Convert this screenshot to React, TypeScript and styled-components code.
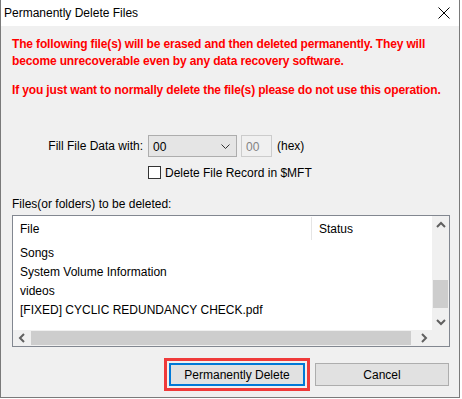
import React from 'react';
import styled, { createGlobalStyle } from 'styled-components';

const GlobalStyle = createGlobalStyle`
  html, body {
    margin: 0;
    padding: 0;
    background: #ffffff;
  }
  body {
    font-family: 'Liberation Sans', Arial, sans-serif;
    font-size: 12px;
    color: #000;
  }
`;

const files = ['Songs', 'System Volume Information', 'videos', '[FIXED] CYCLIC REDUNDANCY CHECK.pdf'];

function Chevron({ dir }: { dir: 'up' | 'down' | 'left' | 'right' }) {
  const pts = {
    up: '1,6 5,2 9,6',
    down: '1,2 5,6 9,2',
    left: '6,1 2,5 6,9',
    right: '2,1 6,5 2,9',
  }[dir];
  const vertical = dir === 'up' || dir === 'down';
  return (
    <svg width={vertical ? 10 : 8} height={vertical ? 8 : 10} viewBox={vertical ? '0 0 10 8' : '0 0 8 10'}>
      <polyline points={pts} fill="none" stroke="#606060" strokeWidth="2" />
    </svg>
  );
}

export default function App() {
  return (
    <>
      <GlobalStyle />
      <Window>
        <TitleBar>
          <Title>Permanently Delete Files</Title>
          <CloseIcon width="12" height="12" viewBox="0 0 12 12">
            <path d="M0.5 0.5 L11.5 11.5 M11.5 0.5 L0.5 11.5" stroke="#000" strokeWidth="1" />
          </CloseIcon>
        </TitleBar>
        <Body>
          <Warning>
            The following file(s) will be erased and then deleted permanently. They will
            <br />
            become unrecoverable even by any data recovery software.
          </Warning>
          <Warning $gap>If you just want to normally delete the file(s) please do not use this operation.</Warning>

          <FormGrid>
            <FieldLabel>Fill File Data with:</FieldLabel>
            <FieldRow>
              <Combo>
                <span>00</span>
                <svg width="9" height="5" viewBox="0 0 9 5">
                  <polyline points="0.5,0.5 4.5,4.5 8.5,0.5" fill="none" stroke="#333" strokeWidth="1" />
                </svg>
              </Combo>
              <HexInput>00</HexInput>
              <Hint>(hex)</Hint>
            </FieldRow>
            <span />
            <CheckRow>
              <CheckBox />
              <span>Delete File Record in $MFT</span>
            </CheckRow>
          </FormGrid>

          <ListLabel>Files(or folders) to be deleted:</ListLabel>
          <ListView>
            <ListMain>
              <HeaderRow>
                <HeaderCell $width={299}>File</HeaderCell>
                <HeaderCell>Status</HeaderCell>
              </HeaderRow>
              <Rows>
                {files.map((f) => (
                  <FileRow key={f}>{f}</FileRow>
                ))}
              </Rows>
            </ListMain>
            <VScroll>
              <ArrowBox $size={17}>
                <Chevron dir="up" />
              </ArrowBox>
              <VTrack>
                <VThumb />
              </VTrack>
              <ArrowBox $size={17}>
                <Chevron dir="down" />
              </ArrowBox>
            </VScroll>
            <HScroll>
              <ArrowBox $size={17}>
                <Chevron dir="left" />
              </ArrowBox>
              <HThumb />
              <ArrowBox $size={17}>
                <Chevron dir="right" />
              </ArrowBox>
            </HScroll>
            <Corner />
          </ListView>

          <ButtonRow>
            <Highlight>
              <Button $primary>Permanently Delete</Button>
            </Highlight>
            <Button>Cancel</Button>
          </ButtonRow>
        </Body>
      </Window>
    </>
  );
}

const Window = styled.div`
  width: 458px;
  height: 397px;
  border: 1px solid #7a7a7a;
  border-top: none;
  background: #f0f0f0;
  display: flex;
  flex-direction: column;
`;

const TitleBar = styled.div`
  height: 26px;
  background: #ffffff;
  display: flex;
  align-items: center;
  justify-content: space-between;
  padding: 0 9px 0 3px;
`;

const Title = styled.div`
  font-size: 12px;
  line-height: 16px;
`;

const CloseIcon = styled.svg`
  display: block;
`;

const Body = styled.div`
  padding: 10px 10px 0 11px;
`;

const Warning = styled.p<{ $gap?: boolean }>`
  margin: ${({ $gap }) => ($gap ? '12px' : '0')} 0 0;
  color: #ff0000;
  font-weight: bold;
  font-size: 12px;
  line-height: 17px;
  letter-spacing: -0.15px;
  white-space: nowrap;
`;

const FormGrid = styled.div`
  margin-top: 36px;
  display: grid;
  grid-template-columns: 136px auto;
  row-gap: 9px;
  align-items: center;
`;

const FieldLabel = styled.div`
  text-align: right;
  padding-right: 5px;
`;

const FieldRow = styled.div`
  display: flex;
  align-items: center;
  height: 22px;
`;

const Combo = styled.div`
  box-sizing: border-box;
  width: 89px;
  height: 22px;
  border: 1px solid #adadad;
  background: #e5e5e5;
  display: flex;
  align-items: center;
  justify-content: space-between;
  padding: 1px 6px 0 4px;
`;

const HexInput = styled.div`
  box-sizing: border-box;
  width: 31px;
  height: 22px;
  margin-left: 4px;
  border: 1px solid #cccccc;
  background: #f0f0f0;
  color: #838383;
  display: flex;
  align-items: center;
  padding: 1px 0 0 4px;
`;

const Hint = styled.span`
  margin-left: 5px;
`;

const CheckRow = styled.label`
  display: flex;
  align-items: center;
  gap: 4px;
  height: 13px;
`;

const CheckBox = styled.span`
  box-sizing: border-box;
  width: 13px;
  height: 13px;
  border: 1px solid #333333;
  background: #ffffff;
`;

const ListLabel = styled.div`
  margin-top: 17px;
  line-height: 16px;
`;

const ListView = styled.div`
  box-sizing: border-box;
  margin-top: 3px;
  width: 438px;
  height: 132px;
  border: 1px solid #828790;
  background: #ffffff;
  display: grid;
  grid-template-columns: 1fr 17px;
  grid-template-rows: 1fr 16px;
`;

const ListMain = styled.div`
  overflow: hidden;
`;

const HeaderRow = styled.div`
  display: flex;
  height: 24px;
  align-items: stretch;
`;

const HeaderCell = styled.div<{ $width?: number }>`
  box-sizing: border-box;
  width: ${({ $width }) => ($width ? `${$width}px` : 'auto')};
  padding-left: 7px;
  display: flex;
  align-items: center;
  border-right: ${({ $width }) => ($width ? '1px solid #e5e5e5' : 'none')};
  margin-top: 1px;
`;

const Rows = styled.div`
  padding-top: 4px;
`;

const FileRow = styled.div`
  height: 19px;
  line-height: 19px;
  padding-left: 7px;
  white-space: nowrap;
`;

const VScroll = styled.div`
  background: #f0f0f0;
  display: flex;
  flex-direction: column;
`;

const ArrowBox = styled.div<{ $size: number }>`
  flex: 0 0 ${({ $size }) => $size}px;
  display: flex;
  align-items: center;
  justify-content: center;
`;

const VTrack = styled.div`
  flex: 1;
  display: flex;
  flex-direction: column;
  justify-content: flex-end;
  padding: 0 1px 1px;
`;

const VThumb = styled.div`
  height: 28px;
  background: #cdcdcd;
  margin-bottom: 4px;
`;

const HScroll = styled.div`
  background: #f0f0f0;
  display: flex;
  align-items: stretch;
`;

const HThumb = styled.div`
  flex: 1;
  background: #cdcdcd;
  margin: 1px 4px 1px 1px;
`;

const Corner = styled.div`
  background: #f0f0f0;
`;

const ButtonRow = styled.div`
  margin-top: 11px;
  display: flex;
  justify-content: flex-end;
  align-items: center;
  gap: 5px;
`;

const Highlight = styled.div`
  border: 3px solid #ef3a3a;
  padding: 2px;
  display: flex;
`;

const Button = styled.button<{ $primary?: boolean }>`
  box-sizing: border-box;
  width: ${({ $primary }) => ($primary ? '136px' : '134px')};
  height: 23px;
  font-family: 'Liberation Sans', Arial, sans-serif;
  font-size: 12px;
  color: #000;
  background: #e1e1e1;
  border: ${({ $primary }) => ($primary ? '2px solid #0078d7' : '1px solid #adadad')};
  padding: 0;
  margin: 0;
`;
